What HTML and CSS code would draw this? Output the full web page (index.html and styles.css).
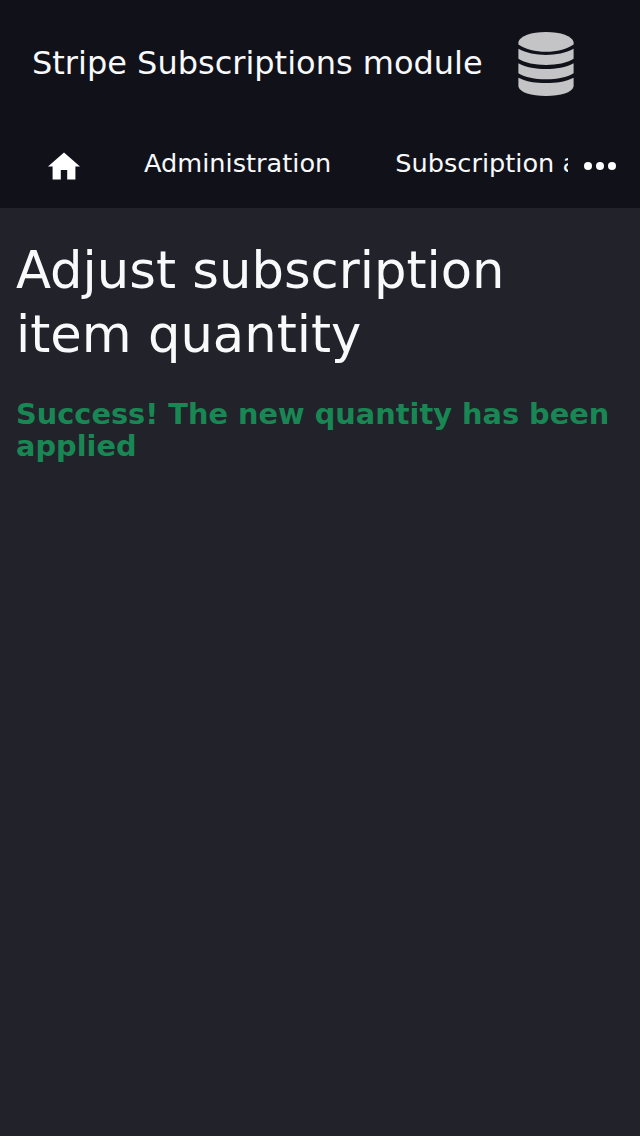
FILE: index.html
```html
<!DOCTYPE html>
<html lang="en">
<head>
<meta charset="utf-8">
<title>Stripe Subscriptions module</title>
<link rel="stylesheet" href="styles.css">
</head>
<body>
<header class="header">
  <div class="brand">
    <span class="brand-name">Stripe Subscriptions module</span>
    <svg class="brand-logo" viewBox="0 0 56 64" aria-hidden="true">
      <path d="M.4 10C2 4 13 0 28 0S54 4 55.600 10V12.500C48 17.500 39 19.800 28 19.800S8 17.500 .4 12.500Z"/>
      <path d="M.4 16.800C8 21 18 22.900 28 22.900S48 21 55.600 16.800V26.800C49 31 39 33 28 33S7 31 .4 26.800Z"/>
      <path d="M.4 31.200C8 35.300 18 37 28 37S48 35.300 55.600 31.200V41.200C49 45.400 39 47.300 28 47.300S7 45.400 .4 41.200Z"/>
      <path d="M.4 45.700C8 49.600 18 51.100 28 51.100S48 49.600 55.600 45.700V54.500C54 60.500 43 64 28 64S2 60.500 .4 54.500Z"/>
    </svg>
  </div>
  <nav class="nav">
    <a class="home" aria-label="Home"><svg viewBox="0 0 32 28"><path d="M16 .4 32 14.500H27.400V27.600H19.200V18H12.800V27.600H4.600V14.500H0Z"/></svg></a>
    <div class="links">
      <a class="link">Administration</a>
      <a class="link">Subscription administration</a>
    </div>
    <a class="more" aria-label="More"><svg viewBox="0 0 32 8"><circle cx="4" cy="4" r="4"/><circle cx="16" cy="4" r="4"/><circle cx="28" cy="4" r="4"/></svg></a>
  </nav>
</header>
<main class="content">
  <h1 class="title">Adjust subscription item quantity</h1>
  <p class="success">Success! The new quantity has been applied</p>
</main>
</body>
</html>
```
FILE: styles.css
```css
body {
  margin: 0;
  min-height: 1136px;
  background: #22222a;
  color: #f8f9fa;
  font-family: "DejaVu Sans", sans-serif;
}
.header {
  height: 208px;
  background: #11111a;
}
.brand {
  display: flex;
  align-items: center;
  height: 128px;
  padding-left: 32px;
}
.brand-name {
  width: 486px;
  padding-bottom: 2px;
  font-size: 32px;
  line-height: 40px;
  white-space: nowrap;
}
.brand-logo {
  width: 56px;
  height: 64px;
  fill: #c4c4c6;
}
.nav {
  display: flex;
  height: 80px;
}
.home {
  width: 64px;
  padding: 24px 0 0 48px;
}
.home svg {
  display: block;
  width: 32px;
  height: 28px;
  fill: #fff;
}
.links {
  display: flex;
  gap: 64px;
  width: 424px;
  padding-left: 32px;
  overflow: hidden;
  font-size: 25.6px;
  line-height: 70px;
  white-space: nowrap;
}
.more {
  padding: 34px 0 0 16px;
}
.more svg {
  display: block;
  width: 32px;
  height: 8px;
  fill: #fff;
}
.content {
  padding: 30px 16px;
}
.title {
  margin: 0;
  font-size: 51.2px;
  font-weight: 400;
  line-height: 64px;
}
.success {
  margin: 32px 0 0;
  color: #198754;
  font-size: 28.8px;
  font-weight: 700;
  line-height: 32px;
}
```
